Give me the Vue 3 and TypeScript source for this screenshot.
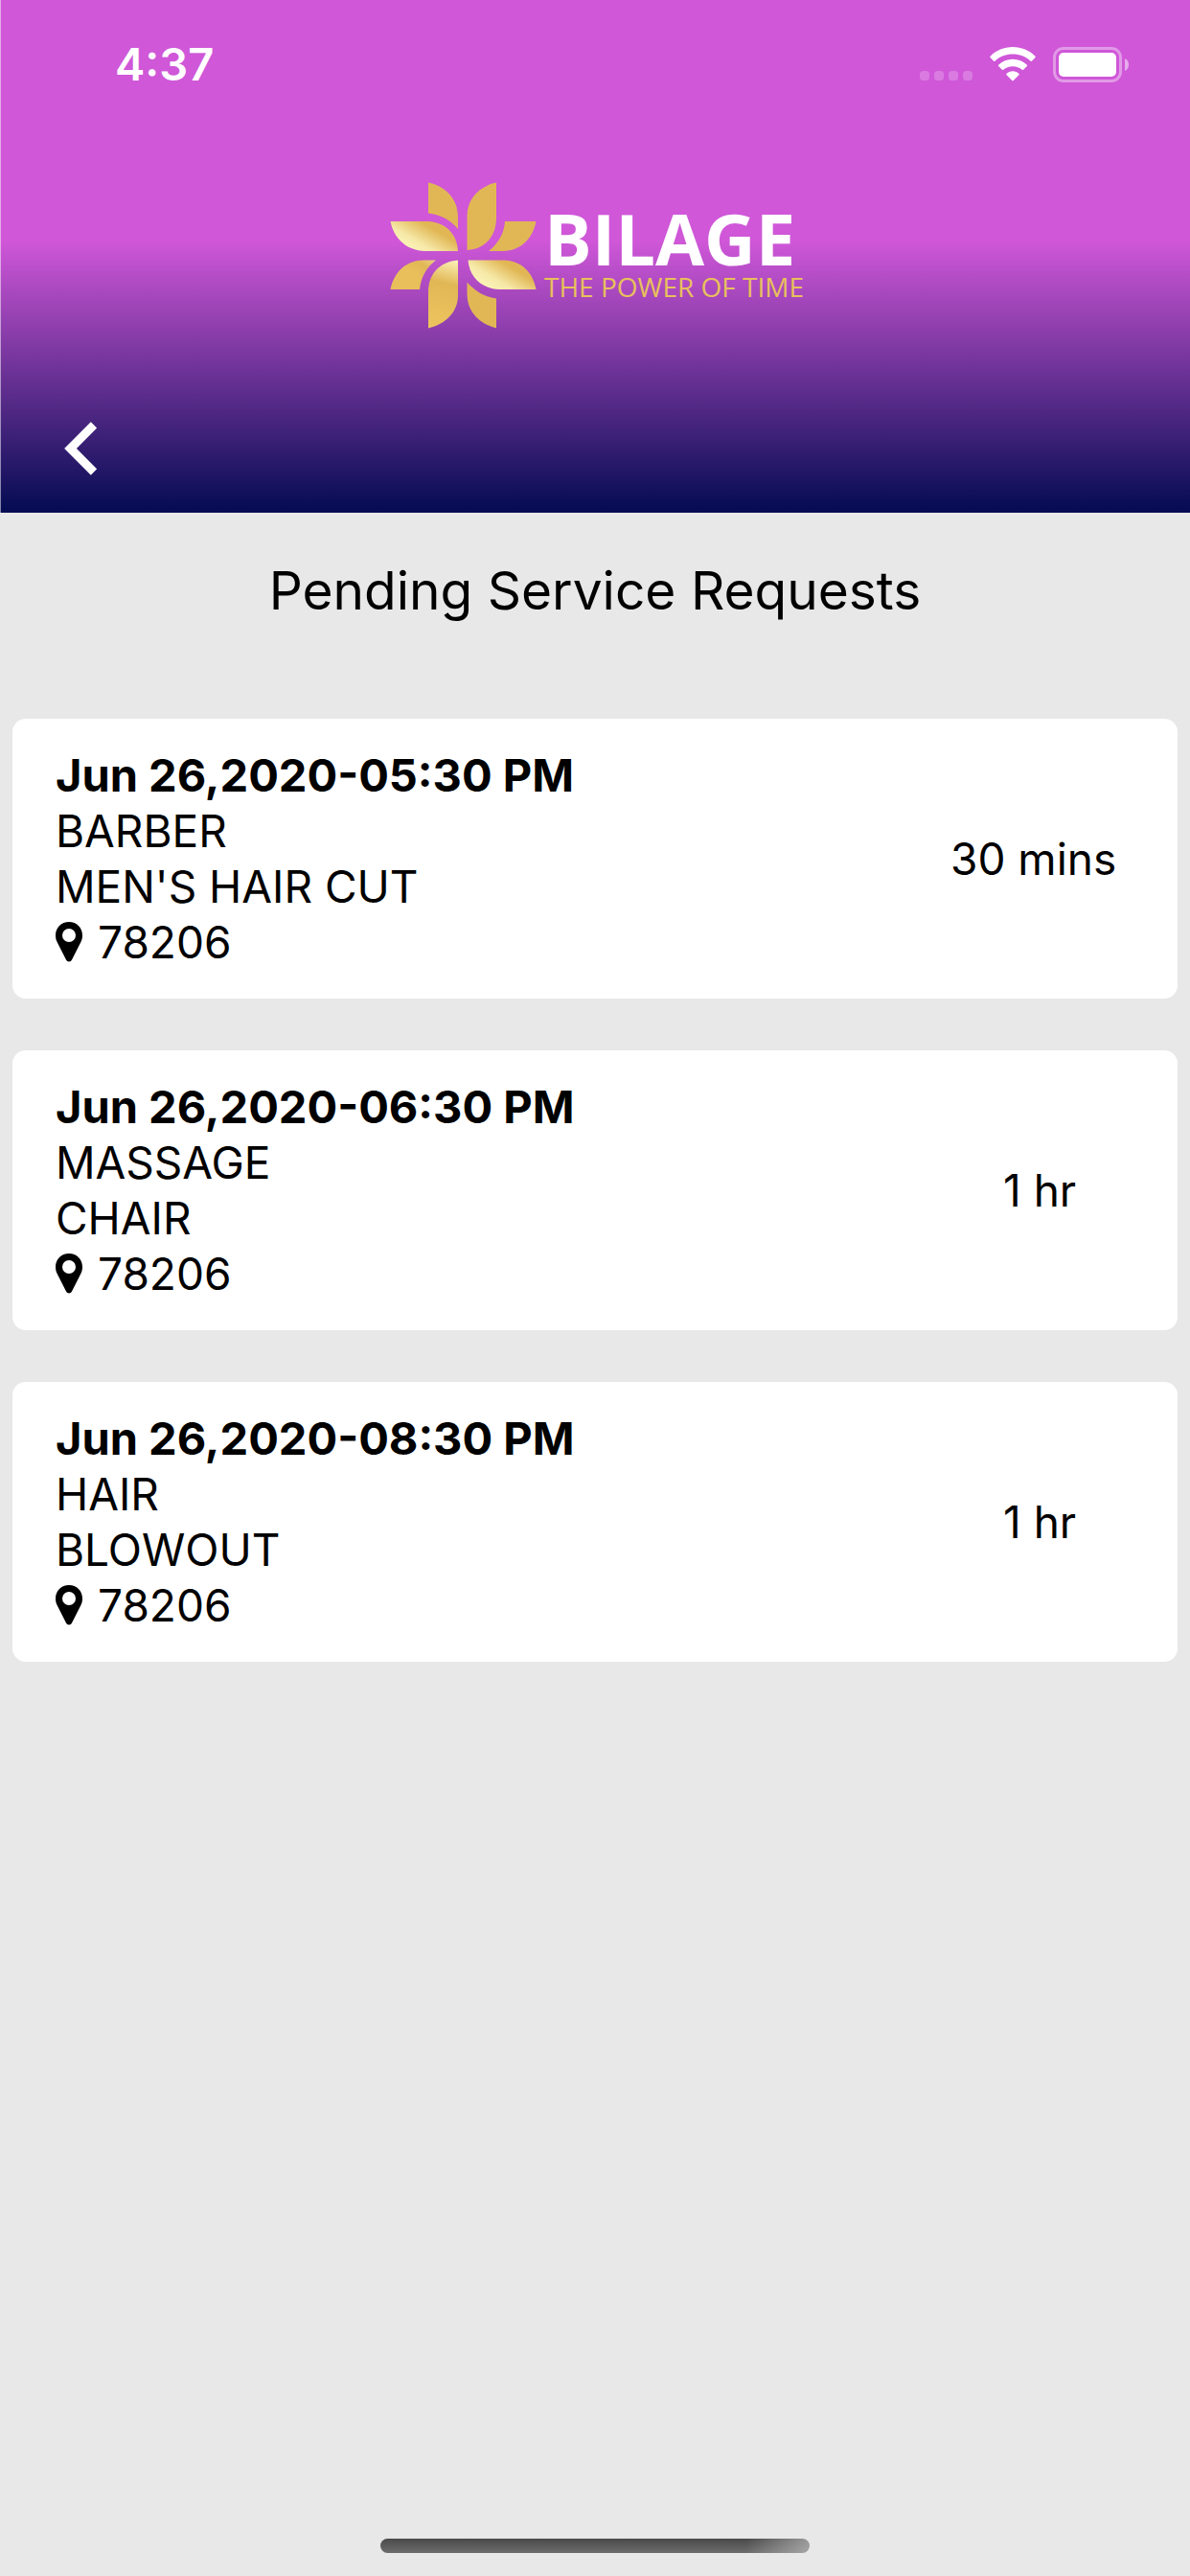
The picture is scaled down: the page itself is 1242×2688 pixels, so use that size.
<script setup lang="ts">
interface ServiceRequest {
  id: number
  when: string
  category: string
  service: string
  zip: string
  hours: string
  minutes: string
}

const requests: ServiceRequest[] = [
  { id: 1, when: 'Jun 26,2020-05:30 PM', category: 'BARBER', service: "MEN'S HAIR CUT", zip: '78206', hours: '', minutes: '30 mins' },
  { id: 2, when: 'Jun 26,2020-06:30 PM', category: 'MASSAGE', service: 'CHAIR', zip: '78206', hours: ' 1 hr', minutes: '' },
  { id: 3, when: 'Jun 26,2020-08:30 PM', category: 'HAIR', service: 'BLOWOUT', zip: '78206', hours: ' 1 hr', minutes: '' },
]

function goBack(): void {
  window.history.back()
}
</script>

<template>
  <div class="screen">
    <header class="header">
      <div class="status">
        <span class="clock">4:37</span>
        <div class="indicators">
          <svg class="dots" width="55" height="10" viewBox="0 0 55 10" aria-hidden="true">
            <g fill="#fff" fill-opacity="0.22">
              <rect x="0" width="10" height="10" rx="3.5" />
              <rect x="15" width="10" height="10" rx="3.5" />
              <rect x="30" width="10" height="10" rx="3.5" />
              <rect x="45" width="10" height="10" rx="3.5" />
            </g>
          </svg>
          <svg width="48" height="36" viewBox="0 0 48 36" aria-hidden="true">
            <g fill="#fff">
              <path d="M24 0C33 0 41.500 3.500 47.500 9.700Q48 10.400 47.500 11L43.900 14.700Q43.300 15.300 42.600 14.700C37.500 10 31 7.500 24 7.500S10.500 10 5.400 14.700Q4.700 15.300 4.100 14.700L0.500 11Q0 10.400 0.500 9.700C6.500 3.500 15 0 24 0Z" />
              <path d="M24 12.700C29.700 12.700 35 14.900 38.900 18.700Q39.500 19.400 38.900 20L35.100 23.800Q34.500 24.400 33.800 23.800C31.100 21.500 27.700 20.200 24 20.200S16.900 21.500 14.200 23.800Q13.500 24.400 12.900 23.800L9.100 20Q8.500 19.400 9.100 18.700C13 14.900 18.300 12.700 24 12.700Z" />
              <path d="M24 25.300C26.500 25.300 28.700 26.200 30.400 27.700Q31.200 28.500 30.400 29.300L24.700 35.100Q24 35.800 23.300 35.100L17.600 29.300Q16.800 28.500 17.600 27.700C19.300 26.200 21.500 25.300 24 25.300Z" />
            </g>
          </svg>
          <svg width="79" height="37" viewBox="0 0 79 37" aria-hidden="true">
            <rect x="1.500" y="1.500" width="69" height="34" rx="9.500" fill="none" stroke="#fff" stroke-opacity="0.4" stroke-width="3" />
            <rect x="6" y="6" width="60" height="25" rx="5" fill="#fff" />
            <path d="M75 12C77.500 13 79 15.500 79 18.500S77.500 24 75 25Z" fill="#fff" fill-opacity="0.5" />
          </svg>
        </div>
      </div>

      <div class="brand">
        <svg class="flower" width="153" height="153" viewBox="0 0 153 153" aria-hidden="true">
          <defs>
            <linearGradient id="petal-left" gradientUnits="userSpaceOnUse" x1="24" y1="72" x2="42" y2="41">
              <stop offset="0" stop-color="#fbf3b8" />
              <stop offset="0.300" stop-color="#f6e9a8" />
              <stop offset="0.850" stop-color="#e1b755" />
            </linearGradient>
            <linearGradient id="petal-right" gradientUnits="userSpaceOnUse" x1="104" y1="112" x2="122" y2="82">
              <stop offset="0" stop-color="#fbf3b8" />
              <stop offset="0.350" stop-color="#f6e9a8" />
              <stop offset="0.900" stop-color="#e1b755" />
            </linearGradient>
            <linearGradient id="petal-down" gradientUnits="userSpaceOnUse" x1="68" y1="82" x2="50" y2="152">
              <stop offset="0" stop-color="#fbf0b4" />
              <stop offset="0.350" stop-color="#e1b755" />
              <stop offset="1" stop-color="#ecc45f" />
            </linearGradient>
            <linearGradient id="petal-corner" gradientUnits="userSpaceOnUse" x1="46" y1="80" x2="34" y2="100">
              <stop offset="0" stop-color="#ecd283" />
              <stop offset="0.500" stop-color="#e1b755" />
              <stop offset="1" stop-color="#e8bf5b" />
            </linearGradient>
          </defs>
          <g fill="#e1b755">
            <path d="M40 0.500C58 4 71 18 71 36V49C63 39 52 34 40 32.500Z" />
            <path d="M111 0.500V37C111 57 99 70 80.500 71V35C80.500 18 93 4 111 0.500Z" />
            <path d="M120 41H152.500C149 59 137 71.500 118 72H103C113 64 119 54 120 41Z" />
            <path d="M0.500 41H40C58 42 70 54 71 72H36C17 71 4 59 0.500 41Z" fill="url(#petal-left)" />
            <path d="M0.500 112C4 94 17 81.500 35 81.500H48C38 89 32.500 99 31 112Z" fill="url(#petal-corner)" />
            <path d="M71 81.500V118C71 136 58 148 40 152.500V114C40 96 52 83 71 81.500Z" fill="url(#petal-down)" />
            <path d="M81.500 81.500H119C137 82 149 94 152.500 112H114C95 111 83 99 81.500 81.500Z" fill="url(#petal-right)" />
            <path d="M80.500 104.500C89 114 99 120 111 121.500V152.500C93 148 80.500 135 80.500 117Z" />
          </g>
        </svg>
        <div class="wordmark">
          <span class="name">BILAGE</span>
          <span class="tagline">THE POWER OF TIME</span>
        </div>
      </div>

      <button class="back" type="button" aria-label="Back" @click="goBack">
        <svg width="34" height="56" viewBox="0 0 34 56" aria-hidden="true">
          <path d="M31 3.500L6.500 28L31 52.500" fill="none" stroke="#fff" stroke-width="9" />
        </svg>
      </button>
    </header>

    <main class="content">
      <h1 class="title">Pending Service Requests</h1>
      <ul class="list">
        <li v-for="r in requests" :key="r.id" class="card">
          <div class="details">
            <strong class="when">{{ r.when }}</strong>
            <span>{{ r.category }}</span>
            <span>{{ r.service }}</span>
            <span class="place">
              <svg width="28" height="42" viewBox="0 0 28 42" aria-hidden="true">
                <path fill-rule="evenodd" d="M14 0C22 0 28 6 28 14C28 17 27.300 19 26.400 21L17 39.500C16 42 12 42 11 39.500L1.600 21C0.700 19 0 17 0 14C0 6 6 0 14 0ZM14 7A7 7 0 1 0 14 21A7 7 0 1 0 14 7Z" />
              </svg>
              {{ r.zip }}
            </span>
          </div>
          <span class="duration">{{ r.hours + r.minutes }}</span>
        </li>
      </ul>
    </main>

    <div class="home-bar"></div>
  </div>
</template>

<style>
body {
  background: #e8e8e8;
}
</style>

<style scoped>
.screen {
  box-sizing: border-box;
  min-height: 100vh;
  display: flex;
  flex-direction: column;
  background: #e8e8e8;
  color: #000;
  font-family: Inter, "Liberation Sans", sans-serif;
  font-size: 46px;
  line-height: 58px;
}

.header {
  display: flex;
  flex-direction: column;
  background: linear-gradient(to bottom, #cf57d8 0%, #cf57d8 47%, #030b51 100%);
  box-shadow: inset 1px 0 rgba(255, 255, 255, 0.5);
}

.status {
  display: flex;
  justify-content: space-between;
  align-items: center;
  padding: 38px 64px 0 120px;
  color: #fff;
}

.clock {
  font-size: 47px;
  font-weight: 600;
}

.indicators {
  display: flex;
  align-items: center;
  gap: 18px;
}

.dots {
  margin-top: 24px;
}

.brand {
  display: flex;
  justify-content: center;
  align-items: center;
  gap: 8px;
  margin-top: 94px;
  padding-left: 4px;
}

.flower {
  flex: none;
}

.wordmark {
  display: flex;
  flex-direction: column;
  padding-bottom: 4px;
  font-family: "Open Sans", "Noto Sans", sans-serif;
}

.name {
  color: #fff;
  font-size: 74px;
  font-weight: 700;
  line-height: 68px;
}

.tagline {
  color: #e8c05c;
  font-size: 28px;
  font-weight: 500;
  line-height: 32px;
}

.back {
  align-self: flex-start;
  display: flex;
  margin: 97px 0 39px;
  padding: 0 24px 0 67px;
  border: 0;
  background: none;
  cursor: pointer;
}

.content {
  flex: 1;
}

.title {
  margin: 0;
  padding: 45px 24px 98px;
  font-size: 55px;
  font-weight: 400;
  line-height: 72px;
  text-align: center;
}

.list {
  display: flex;
  flex-direction: column;
  gap: 54px;
  margin: 0;
  padding: 0 13px;
  list-style: none;
}

.card {
  display: flex;
  align-items: center;
  justify-content: space-between;
  padding: 30px 0 30px 45px;
  border-radius: 14px;
  background: #fff;
}

.details {
  display: flex;
  flex-direction: column;
}

.when {
  font-size: 47px;
  font-weight: 700;
}

.place {
  display: flex;
  align-items: center;
  gap: 16px;
}

.duration {
  box-sizing: border-box;
  flex: 0 0 25%;
  padding-right: 8px;
  text-align: center;
  white-space: pre;
}

.home-bar {
  align-self: center;
  width: 36%;
  height: 15px;
  margin-bottom: 24px;
  border-radius: 8px;
  background:
    linear-gradient(100deg, transparent 85%, rgba(190, 190, 190, 0.7) 100%),
    linear-gradient(to bottom, #4a4a4a, #6c6c6c);
}
</style>
